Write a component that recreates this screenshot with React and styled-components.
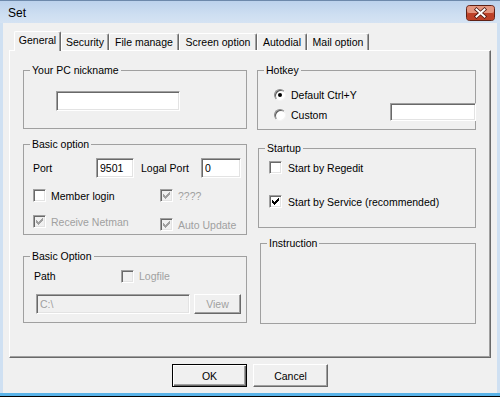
import React from 'react';
import styled, { createGlobalStyle, css } from 'styled-components';

const Global = createGlobalStyle`
  html, body { margin: 0; padding: 0; background: #fff; }
  body { font-family: "Liberation Sans", Arial, sans-serif; font-size: 10.5px; color: #000; }
  * { box-sizing: border-box; }
`;

const Window = styled.div`
  width: 500px;
  height: 397px;
  display: flex;
  flex-direction: column;
  border-bottom: 1px solid #000;
  background: #c9dcf0;
`;

const TitleBar = styled.div`
  height: 23px;
  flex: none;
  display: flex;
  align-items: center;
  justify-content: space-between;
  padding-left: 8px;
  background: linear-gradient(#bcd2ec, #cddef1 60%, #d5e3f3);
  border-top: 1px solid #6d89ab;
`;

const Title = styled.span`
  font-size: 12px;
  color: #000;
  padding-top: 1px;
`;

const CloseIcon = styled.svg`
  flex: none;
  display: block;
  margin-right: 5px;
  margin-top: 1px;
`;

const Frame = styled.div`
  flex: 1;
  display: flex;
  padding: 0 3px 3px 3px;
  background: linear-gradient(#5ab3e8, #5ab3e8) bottom / 100% 3px no-repeat, #cfe0f2;
`;

const Client = styled.div`
  flex: 1;
  background: #f0f0f0;
  padding: 8px 6px 0 6px;
  display: flex;
  flex-direction: column;
`;

const TabStrip = styled.div`
  height: 19px;
  display: flex;
  align-items: flex-end;
  padding-left: 5px;
  position: relative;
  z-index: 1;
`;

const Tab = styled.div`
  width: ${(p) => p.$w}px;
  height: ${(p) => (p.$active ? 20 : 17)}px;
  margin-bottom: ${(p) => (p.$active ? -1 : 0)}px;
  display: flex;
  align-items: center;
  justify-content: center;
  background: #f0f0f0;
  border-top: 1px solid #fff;
  border-left: 1px solid #fff;
  border-right: 1px solid #696969;
  box-shadow: inset -1px 0 0 #a0a0a0;
  border-radius: 2px 2px 0 0;
  padding-bottom: ${(p) => (p.$active ? 3 : 0)}px;
  white-space: nowrap;
`;

const Panel = styled.div`
  height: 308px;
  background: #f0f0f0;
  border-top: 1px solid #fff;
  border-left: 1px solid #fff;
  border-right: 1px solid #696969;
  border-bottom: 1px solid #696969;
  box-shadow: inset -1px -1px 0 #a0a0a0;
  display: grid;
  grid-template-columns: 224px 219px;
  column-gap: 10px;
  align-items: start;
  padding-left: 13px;
`;

const Column = styled.div`
  display: flex;
  flex-direction: column;
`;

const Group = styled.fieldset`
  margin: ${(p) => p.$mt || 0}px 0 0 ${(p) => p.$ml || 0}px;
  width: calc(100% - ${(p) => p.$ml || 0}px);
  height: ${(p) => p.$h}px;
  padding: 0;
  min-width: 0;
  border: 1px solid #a0a0a0;
  display: flex;
  flex-direction: column;
  align-items: stretch;
`;

const Legend = styled.legend`
  margin-left: 6px;
  padding: 0 2px;
  line-height: 14px;
  font-size: 10.5px;
`;

const Row = styled.div`
  display: flex;
  align-items: ${(p) => p.$align || 'center'};
  height: ${(p) => p.$h}px;
  margin-top: ${(p) => p.$mt || 0}px;
  padding-left: ${(p) => p.$pl || 0}px;
`;

const Label = styled.span`
  width: ${(p) => (p.$w ? `${p.$w}px` : 'auto')};
  margin-left: ${(p) => p.$ml || 0}px;
  flex: none;
  white-space: nowrap;
  color: ${(p) => (p.$off ? '#a0a0a0' : '#000')};
`;

const Field = styled.input`
  width: ${(p) => p.$w}px;
  height: ${(p) => p.$h || 20}px;
  margin: 0 ${(p) => p.$mr || 0}px 0 ${(p) => (p.$auto ? 'auto' : `${p.$ml || 0}px`)};
  flex: none;
  border: 1px solid;
  border-color: #a0a0a0 #fff #fff #a0a0a0;
  box-shadow: inset 1px 1px 0 #696969, inset -1px -1px 0 #e3e3e3;
  background: ${(p) => (p.$off ? '#f0f0f0' : '#fff')};
  padding: 0 3px;
  font: inherit;
  color: ${(p) => (p.$off ? '#a0a0a0' : '#000')};
  -webkit-text-fill-color: ${(p) => (p.$off ? '#a0a0a0' : '#000')};
  outline: none;
  border-radius: 0;
  position: relative;
`;

const CheckItem = styled.label`
  display: flex;
  align-items: center;
  gap: ${(p) => p.$gap || 5}px;
  width: ${(p) => (p.$w ? `${p.$w}px` : 'auto')};
  margin-top: ${(p) => p.$mt || 0}px;
  flex: none;
  height: 13px;
  white-space: nowrap;
  color: ${(p) => (p.$off ? '#a0a0a0' : '#000')};
`;

const Box = styled.span`
  width: 13px;
  height: 13px;
  flex: none;
  display: inline-flex;
  align-items: center;
  justify-content: center;
  border: 1px solid;
  border-color: #a0a0a0 #fff #fff #a0a0a0;
  box-shadow: inset 1px 1px 0 #696969, inset -1px -1px 0 #e3e3e3;
  background: ${(p) => (p.$off ? '#f0f0f0' : '#fff')};
`;

const RadioDot = styled.span`
  width: 12px;
  height: 12px;
  flex: none;
  border-radius: 50%;
  border: 1px solid;
  border-color: #8a8a8a #f4f4f4 #f4f4f4 #8a8a8a;
  box-shadow: inset 1px 1px 0 #5a5a5a;
  background: #fff;
  display: inline-flex;
  align-items: center;
  justify-content: center;
  ${(p) =>
    p.$on &&
    css`
      &::after {
        content: '';
        width: 4px;
        height: 4px;
        border-radius: 50%;
        background: #000;
      }
    `}
`;

const ButtonRow = styled.div`
  display: flex;
  justify-content: center;
  gap: 6px;
  margin-top: 6px;
`;

const Btn = styled.button`
  width: ${(p) => p.$w || 75}px;
  height: ${(p) => p.$h || 23}px;
  margin-left: ${(p) => p.$ml || 0}px;
  flex: none;
  padding: 0;
  font: inherit;
  background: #f0f0f0;
  border: 1px solid;
  border-radius: 0;
  color: ${(p) => (p.$off ? '#a0a0a0' : '#000')};
  ${(p) =>
    p.$default
      ? css`
          border-color: #000;
          box-shadow: inset 1px 1px 0 #fff, inset -1px -1px 0 #696969, inset -2px -2px 0 #a0a0a0;
        `
      : css`
          border-color: #fff #696969 #696969 #fff;
          box-shadow: inset -1px -1px 0 #a0a0a0;
        `}
`;

const CheckMark = ({ color }) => (
  <svg width="7" height="7" viewBox="0 0 7 7" shapeRendering="crispEdges">
    {[2, 3, 4, 3, 2, 1, 0].map((y, x) => (
      <rect key={x} x={x} y={y} width="1" height="3" fill={color} />
    ))}
  </svg>
);

const Check = ({ checked, off, label, w, mt, gap }) => (
  <CheckItem $off={off} $w={w} $mt={mt} $gap={gap}>
    <Box $off={off}>{checked && <CheckMark color={off ? '#a0a0a0' : '#000'} />}</Box>
    {label && <span>{label}</span>}
  </CheckItem>
);

const Radio = ({ on, label }) => (
  <CheckItem $gap={5}>
    <RadioDot $on={on} />
    <span>{label}</span>
  </CheckItem>
);

const tabs = [
  ['General', 47],
  ['Security', 48],
  ['File manage', 70],
  ['Screen option', 78],
  ['Autodial', 50],
  ['Mail option', 62],
];

const Close = () => (
  <CloseIcon width="29" height="16" viewBox="0 0 29 16">
    <rect x="0.5" y="0.5" width="28" height="15" rx="3" fill="#c9563d" stroke="#5e2116" />
    <rect x="1" y="1" width="27" height="7" rx="2.5" fill="#e49680" />
    <rect x="1" y="8" width="27" height="7" rx="2.5" fill="#bd4128" />
    <path d="M10.5 4.5 L18.5 11.5 M18.5 4.5 L10.5 11.5" stroke="#4a150d" strokeWidth="3.6" strokeLinecap="square" />
    <path d="M10.5 4.5 L18.5 11.5 M18.5 4.5 L10.5 11.5" stroke="#ffffff" strokeWidth="2" strokeLinecap="square" />
  </CloseIcon>
);

export default function App() {
  return (
    <>
      <Global />
      <Window>
        <TitleBar>
          <Title>Set</Title>
          <Close />
        </TitleBar>
        <Frame>
          <Client>
            <TabStrip>
              {tabs.map(([t, w], i) => (
                <Tab key={t} $w={w} $active={i === 0}>
                  {t}
                </Tab>
              ))}
            </TabStrip>
            <Panel>
              <Column>
                <Group $h={66} $mt={12}>
                  <Legend>Your PC nickname</Legend>
                  <Row $h={20} $mt={14} $pl={32}>
                    <Field $w={124} defaultValue="" readOnly />
                  </Row>
                </Group>
                <Group $h={98} $mt={8}>
                  <Legend>Basic option</Legend>
                  <Row $h={20} $mt={7} $pl={9}>
                    <Label $w={63}>Port</Label>
                    <Field $w={38} defaultValue="9501" readOnly />
                    <Label $w={60} $ml={7}>Logal Port</Label>
                    <Field $w={40} defaultValue="0" readOnly />
                  </Row>
                  <Row $h={13} $mt={11} $pl={9}>
                    <Check w={127} label="Member login" />
                    <Check checked off label="????" />
                  </Row>
                  <Row $h={16} $mt={13} $pl={9} $align="flex-start">
                    <Check w={127} checked off label="Receive Netman" />
                    <Check checked off mt={3} label="Auto Update" />
                  </Row>
                </Group>
                <Group $h={74} $mt={14}>
                  <Legend>Basic Option</Legend>
                  <Row $h={14} $mt={6} $pl={10}>
                    <Label $w={87}>Path</Label>
                    <Check off label="Logfile" />
                  </Row>
                  <Row $h={20} $mt={11} $pl={12}>
                    <Field $w={154} $off defaultValue="C:\" readOnly />
                    <Btn $w={47} $h={20} $ml={4} $off>
                      View
                    </Btn>
                  </Row>
                </Group>
              </Column>
              <Column>
                <Group $h={67} $mt={12}>
                  <Legend>Hotkey</Legend>
                  <Row $h={13} $mt={11} $pl={16}>
                    <Radio on label="Default Ctrl+Y" />
                  </Row>
                  <Row $h={18} $mt={2} $pl={16} $align="flex-end">
                    <Radio label="Custom" />
                    <Field $w={86} $h={18} $auto $mr={-1} readOnly defaultValue="" />
                  </Row>
                </Group>
                <Group $h={87} $mt={11} $ml={1}>
                  <Legend>Startup</Legend>
                  <Row $h={13} $mt={6} $pl={10}>
                    <Check gap={6} label="Start by Regedit" />
                  </Row>
                  <Row $h={13} $mt={21} $pl={10}>
                    <Check gap={6} checked label="Start by Service (recommended)" />
                  </Row>
                </Group>
                <Group $h={88} $mt={8} $ml={3}>
                  <Legend>Instruction</Legend>
                </Group>
              </Column>
            </Panel>
            <ButtonRow>
              <Btn $default>OK</Btn>
              <Btn>Cancel</Btn>
            </ButtonRow>
          </Client>
        </Frame>
      </Window>
    </>
  );
}
